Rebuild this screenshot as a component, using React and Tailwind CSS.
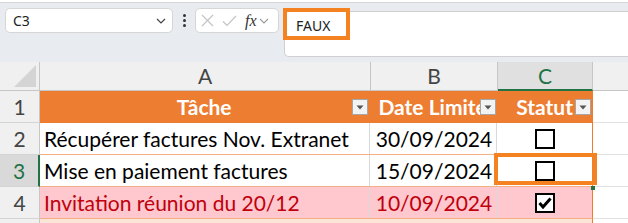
import React from "react";

const Filter = () => (
  <div className="w-[16px] h-[16px] bg-[#f3f3f3] border border-[#a6a6a6] flex items-center justify-center shrink-0">
    <svg width="8" height="5" viewBox="0 0 8 5">
      <path d="M0.5 0.5 L7.5 0.5 L4 4.5 Z" fill="#555" />
    </svg>
  </div>
);

const Box = ({ checked }) => (
  <div className="w-[20px] h-[20px] border-2 border-black bg-white flex items-center justify-center">
    {checked && (
      <svg width="14" height="12" viewBox="0 0 14 12">
        <path d="M1.5 6 L5 10 L12.5 1.5" stroke="black" strokeWidth="3" fill="none" />
      </svg>
    )}
  </div>
);

function RowHead({ n, active }) {
  return (
    <div
      className={`w-[40px] h-full flex items-center justify-center border-b border-[#d4d4d4] ${
        active
          ? "bg-[#d9d9d9] text-[#217346] border-r-2 border-r-[#217346]"
          : "bg-[#f0f0f0] text-[#444] border-r border-r-[#c6c6c6]"
      }`}
    >
      {n}
    </div>
  );
}

export default function App() {
  const rows = [
    { n: 2, task: "Récupérer factures Nov. Extranet", date: "30/09/2024", done: false },
    { n: 3, task: "Mise en paiement factures", date: "15/09/2024", done: false, active: true },
    { n: 4, task: "Invitation réunion du 20/12", date: "10/09/2024", done: true, red: true },
  ];

  return (
    <div className="w-[628px] h-[223px] overflow-hidden bg-[#e8ebef] relative font-['Lato',sans-serif]">
      {/* ribbon edge */}
      <div className="h-[3px] bg-white border-b border-[#d6d6d6]" />

      {/* formula bar */}
      <div className="flex items-start pl-[5px] pt-[5px] h-[59px] font-['Noto_Sans',sans-serif]">
        <div className="w-[168px] h-[25px] bg-white border border-[#d6d6d6] rounded-[5px] flex items-center justify-between pl-[7px] pr-[6px] text-[14px] text-[#222]">
          <span>C3</span>
          <svg width="10" height="6" viewBox="0 0 10 6">
            <path d="M1 1 L5 5 L9 1" stroke="#444" strokeWidth="1.2" fill="none" />
          </svg>
        </div>
        <div className="w-[22px] h-[25px] flex flex-col items-center justify-center gap-[2px]">
          <div className="w-[3px] h-[3px] bg-[#333] rounded-full" />
          <div className="w-[3px] h-[3px] bg-[#333] rounded-full" />
          <div className="w-[3px] h-[3px] bg-[#333] rounded-full" />
        </div>
        <div className="w-[84px] h-[25px] bg-white border border-[#d6d6d6] rounded-[5px] flex items-center pl-[5px] gap-[8px]">
          <svg width="13" height="13" viewBox="0 0 13 13">
            <path d="M1 1 L12 12 M12 1 L1 12" stroke="#c4c4c4" strokeWidth="1.2" />
          </svg>
          <svg width="15" height="12" viewBox="0 0 15 12">
            <path d="M1 6.5 L5 10.5 L14 1" stroke="#c4c4c4" strokeWidth="1.2" fill="none" />
          </svg>
          <div className="flex items-center gap-[2px]">
            <span className="font-['Liberation_Serif',serif] italic text-[16px] text-[#333] leading-none">fx</span>
            <svg width="10" height="6" viewBox="0 0 10 6">
              <path d="M1 1 L5 5 L9 1" stroke="#999" strokeWidth="1.1" fill="none" />
            </svg>
          </div>
        </div>
        <div className="flex-1 ml-[5px] mt-[3px] h-[46px] bg-white border border-[#d0d0d0] border-r-0 rounded-l-[5px] pl-[11px] pt-[3px] text-[14px] text-[#222]">
          FAUX
        </div>
      </div>

      {/* column headers */}
      <div className="flex h-[29px] text-[21px] text-[#444]">
        <div className="w-[40px] h-full bg-[#f0f0f0] border-r border-b border-[#c6c6c6] relative">
          <svg className="absolute right-[3px] bottom-[3px]" width="22" height="22" viewBox="0 0 22 22">
            <path d="M22 0 L22 22 L0 22 Z" fill="#d4d4d4" />
          </svg>
        </div>
        <div className="w-[331px] h-full bg-[#f0f0f0] border-r border-b border-[#c6c6c6] flex items-center justify-center">A</div>
        <div className="w-[127px] h-full bg-[#f0f0f0] border-r border-b border-[#c6c6c6] flex items-center justify-center">B</div>
        <div className="w-[95px] h-full bg-[#e0e0e0] border-r border-[#c6c6c6] border-b-2 border-b-[#217346] text-[#217346] flex items-center justify-center">C</div>
        <div className="flex-1 h-full bg-[#f0f0f0] border-b border-[#c6c6c6]" />
      </div>

      {/* row 1 - table header */}
      <div className="flex h-[32px] text-[21px]">
        <RowHead n={1} />
        <div className="w-[553px] h-full bg-[#ed7d31] flex items-center text-white font-bold border-r border-[#ed7d31]">
          <div className="w-[331px] h-full flex items-center pr-[2px]">
            <span className="flex-1 text-center pl-[16px]">Tâche</span>
            <Filter />
          </div>
          <div className="w-[127px] h-full flex items-center pl-[8px] pr-[1px] overflow-hidden">
            <span className="flex-1 whitespace-nowrap overflow-hidden">Date Limite</span>
            <Filter />
          </div>
          <div className="w-[95px] h-full flex items-center pl-[19px] pr-[1px] overflow-hidden">
            <span className="flex-1 whitespace-nowrap overflow-hidden">Statut</span>
            <Filter />
          </div>
        </div>
        <div className="flex-1 h-full bg-white border-b border-[#e1e1e1]" />
      </div>

      {/* data rows */}
      {rows.map((r) => (
        <div key={r.n} className="flex h-[32px] text-[21px]">
          <RowHead n={r.n} active={r.active} />
          <div
            className={`w-[553px] h-full flex border-r border-r-[#ed7d31] border-b border-b-[#f4b084] ${
              r.red ? "bg-[#ffc7ce] text-[#c0000c]" : "bg-white text-black"
            }`}
          >
            <div className="w-[331px] h-full flex items-center pl-[4px] border-r border-[#d9d9d9] whitespace-nowrap">
              {r.task}
            </div>
            <div className="w-[127px] h-full flex items-center justify-end pr-[4px] border-r border-[#d9d9d9]">
              {r.date}
            </div>
            <div className="w-[95px] h-full flex items-center justify-center">
              <Box checked={r.done} />
            </div>
          </div>
          <div className="flex-1 h-full bg-white border-b border-[#e1e1e1]" />
        </div>
      ))}

      {/* row 5 */}
      <div className="flex h-[10px]">
        <div className="w-[40px] h-full bg-[#f0f0f0] border-r border-[#c6c6c6]" />
        <div className="w-[553px] h-full bg-[#fce4d6] border-r border-[#ed7d31]" />
        <div className="flex-1 h-full bg-white" />
      </div>

      {/* highlight overlays */}
      <div className="absolute left-[283px] top-[8px] w-[67px] h-[32px] border-4 border-[#f58220]" />
      <div className="absolute left-[494px] top-[153px] w-[103px] h-[32px] border-4 border-[#f58220]" />
      <div className="absolute left-[591px] top-[186px] w-[4px] h-[4px] bg-[#217346]" />
    </div>
  );
}
